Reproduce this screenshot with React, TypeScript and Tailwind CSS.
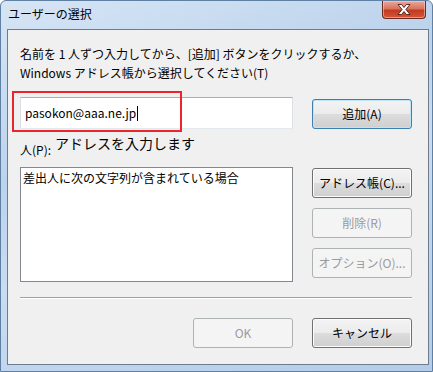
import React from 'react'

const font = '[font-family:"Noto_Sans_CJK_JP","Noto_Sans",sans-serif]'

const btnBase =
  'flex h-[30px] w-[100px] items-center justify-center rounded-[3px] border text-[12px] leading-none'

// 通常のボタン（Vista の上下二段グラデーション）
function Button({ children, isDefault }: { children: React.ReactNode; isDefault?: boolean }) {
  return (
    <div
      className={`${btnBase} text-black bg-[linear-gradient(to_bottom,#f3f3f3_0%,#ececec_48%,#dcdcdc_52%,#cfcfcf_100%)] ${
        isDefault
          ? 'border-[#3c7fb1] shadow-[inset_0_0_0_1px_#bfe4f8]'
          : 'border-[#707070] shadow-[inset_0_0_0_1px_#fcfcfc]'
      }`}
    >
      {children}
    </div>
  )
}

function DisabledButton({ children }: { children: React.ReactNode }) {
  return <div className={`${btnBase} border-[#adb2b5] bg-[#f4f4f4] text-[#9b9b9b]`}>{children}</div>
}

function CloseIcon() {
  return (
    <svg width="18" height="13" viewBox="0 0 18 13" aria-hidden="true">
      <path
        d="M3 1.5h3.6l2.4 3 2.4-3H15l-4.1 5 4.1 5h-3.6l-2.4-3-2.4 3H3l4.1-5z"
        fill="#fff"
        stroke="#4a1e16"
        strokeWidth="0.9"
        strokeLinejoin="round"
      />
    </svg>
  )
}

export default function App() {
  return (
    <div
      className={`${font} relative h-[372px] w-[433px] overflow-hidden rounded-t-[6px] border border-[#5f7fa3] bg-[linear-gradient(160deg,#d6e5f5_0%,#bcd3ec_35%,#c9dcf1_55%,#b3cce8_100%)]`}
    >
      {/* タイトルバー */}
      <div className="flex h-[28px] items-start">
        <div className="pl-[7px] pt-[4px] text-[12px] leading-[18px] text-black">ユーザーの選択</div>
        <div className="ml-auto mr-[6px] flex h-[18px] w-[44px] items-center justify-center rounded-b-[4px] border border-t-0 border-[#6b2a1e] bg-[linear-gradient(to_bottom,#e9a99a_0%,#d8735f_45%,#c23a20_55%,#d5553a_100%)] shadow-[inset_0_0_0_1px_rgba(255,220,210,0.5)]">
          <CloseIcon />
        </div>
      </div>

      {/* クライアント領域 */}
      <div className="ml-[6px] h-[336px] w-[422px] border border-[#6d7c8c] bg-[#f0f0f0] text-black">
        <div className="pl-[12px] pt-[14px] text-[12px] leading-[19px]">
          <div>名前を 1 人ずつ入力してから、[追加] ボタンをクリックするか、</div>
          <div>Windows アドレス帳から選択してください(T)</div>
        </div>

        <div className="relative mt-[15px] flex pl-[12px]">
          {/* 左の列 */}
          <div className="flex w-[273px] flex-col">
            <div className="flex h-[32px] items-center border border-[#abadb3] border-x-[#dbdfe6] border-b-[#e3e9ef] bg-white pl-[4px] text-[12px]">
              <span>pasokon@aaa.ne.jp</span>
              <span className="ml-[1px] h-[15px] w-px bg-black" />
            </div>
            <div className="flex h-[38px] items-start">
              <div className="mt-[13px] text-[12px] leading-[16px]">人(P):</div>
              <div className="ml-[4px] mt-[5px] text-[14px] leading-[18px]">アドレスを入力します</div>
            </div>
            <div className="h-[115px] border border-[#828790] bg-white pl-[2px] pt-[2px] text-[12px] leading-[16px]">
              差出人に次の文字列が含まれている場合
            </div>
          </div>

          {/* 右の列 */}
          <div className="ml-[19px] flex flex-col">
            <div className="mt-[2px]">
              <Button isDefault>追加(A)</Button>
            </div>
            <div className="mt-[39px] flex flex-col gap-[10px]">
              <Button>アドレス帳(C)...</Button>
              <DisabledButton>削除(R)</DisabledButton>
              <DisabledButton>オプション(O)...</DisabledButton>
            </div>
          </div>

          {/* 注記の赤枠 */}
          <div className="absolute left-[4px] top-[-6px] h-[41px] w-[170px] border-2 border-[#e8262c]" />
        </div>

        <div className="ml-[12px] mt-[15px] h-[2px] w-[392px] border-b border-t border-[#a0a0a0] border-b-white" />

        <div className="mr-[16px] mt-[19px] flex justify-end gap-[19px]">
          <DisabledButton>OK</DisabledButton>
          <Button>キャンセル</Button>
        </div>
      </div>
    </div>
  )
}
